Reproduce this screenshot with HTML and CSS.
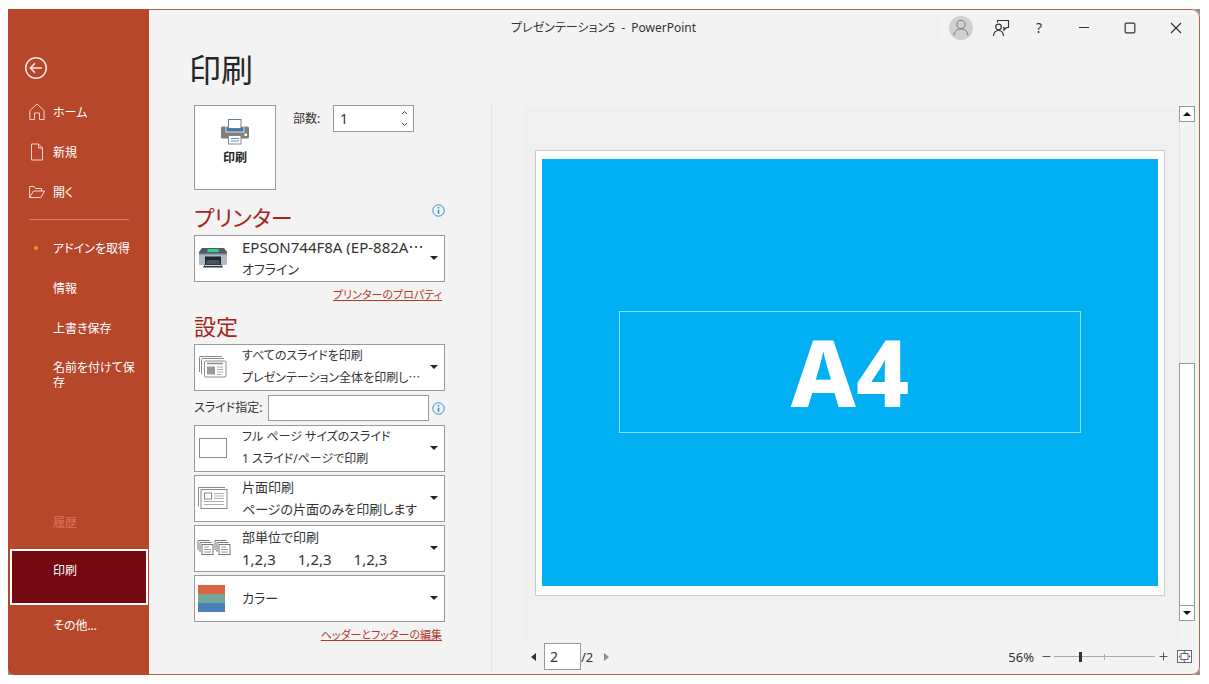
FILE: index.html
```html
<!DOCTYPE html>
<html lang="ja">
<head>
<meta charset="utf-8">
<title>プレゼンテーション5 - PowerPoint</title>
<link rel="stylesheet" href="styles.css">
</head>
<body>
<div class="desktop">
<div class="window">
  <nav class="sidebar" aria-label="ファイル">
    <button class="back" aria-label="戻る"><svg width="24" height="24" viewBox="0 0 24 24"><circle cx="12" cy="12" r="10.3"/><path d="M18 12H6.5M11 7.3L6.3 12l4.7 4.7"/></svg></button>
    <a class="item" href="#"><svg class="item-icon" width="16" height="18" viewBox="0 0 16 18"><path d="M.9 7.6L8 1l7.100 6.600V16.500H10.500V10H5.500v6.500H.9z"/></svg>ホーム</a>
    <a class="item" href="#"><svg class="item-icon" width="16" height="18" viewBox="0 0 16 18"><path d="M2.500 1h7L13.500 5v12h-11zM9.500 1v4h4"/></svg>新規</a>
    <a class="item" href="#"><svg class="item-icon" width="16" height="18" viewBox="0 0 16 18"><path d="M.6 14.500V3.500h4.500l1.500 2H12.500V8M.6 14.500L4.500 8H15.500L12 14.500z"/></svg>開く</a>
    <hr class="rule">
    <a class="item" href="#"><span class="item-icon"><span class="dot"></span></span>アドインを取得</a>
    <a class="item" href="#">情報</a>
    <a class="item" href="#">上書き保存</a>
    <a class="item item-tall" href="#">名前を付けて保存</a>
    <div class="sidebar-bottom">
      <a class="item disabled" href="#" aria-disabled="true">履歴</a>
      <a class="item current" href="#" aria-current="page">印刷</a>
      <a class="item" href="#">その他...</a>
    </div>
  </nav>

  <main class="main">
    <header class="titlebar">
      <div class="doc-title">プレゼンテーション5&nbsp; -&nbsp; PowerPoint</div>
      <span class="account-name"></span>
      <button class="tool account" aria-label="アカウント"><svg width="24" height="24" viewBox="0 0 24 24"><circle cx="12" cy="12" r="12" fill="#d0d0d0"/><g fill="none" stroke="#777"><circle cx="12" cy="8.500" r="4.200"/><path d="M5 19.500c.5-4.500 3-6.500 7-6.500s6.500 2 7 6.500"/></g></svg></button>
      <button class="tool" aria-label="フィードバック"><svg width="18" height="18" viewBox="0 0 18 18" fill="none" stroke="#333" stroke-width="1.200"><path d="M5.500 3.500V1.500H16.500V8.500H14.500L12 11V8.500H11"/><circle cx="6.500" cy="8" r="2.800"/><path d="M1.500 17c.3-3.500 2-5.500 5-5.500s4.700 2 5 5.500"/></svg></button>
      <button class="tool help" aria-label="ヘルプ">?</button>
      <button class="tool win" aria-label="最小化"><svg width="12" height="12" viewBox="0 0 12 12"><path d="M1 5.500H11"/></svg></button>
      <button class="tool win" aria-label="最大化"><svg width="12" height="12" viewBox="0 0 12 12"><rect x="1.200" y="1.200" width="9.600" height="9.600" rx="1"/></svg></button>
      <button class="tool win" aria-label="閉じる"><svg width="12" height="12" viewBox="0 0 12 12"><path d="M1 1l10 10M11 1L1 11"/></svg></button>
    </header>
    <h1>印刷</h1>

    <div class="columns">
      <form class="settings">
        <div class="print-row">
          <button class="print" type="button"><svg width="28" height="26" viewBox="0 0 28 26"><rect x="0" y="7.500" width="28" height="12" rx="1.500" fill="#7f7f7f"/><path d="M5 7.500h18v5.500H5z" fill="#3f76a8" stroke="#dce6ee"/><rect x="7.500" y=".5" width="12.500" height="9" fill="#fff" stroke="#6f7f8f"/><rect x="23.500" y="14.500" width="2.500" height="2.500" fill="#fff"/><rect x="7.500" y="16.500" width="12.500" height="8.500" fill="#fff" stroke="#8a8a8a"/><path d="M10 19.500h8M10 22h8" stroke="#5f8fc0"/></svg>印刷</button>
          <label class="copies-label" for="copies">部数:</label>
          <div class="spinner"><input id="copies" type="number" value="1" min="1">
            <span class="spin-buttons"><button type="button" aria-label="増やす"><svg width="7" height="5" viewBox="0 0 7 5"><path d="M1 4l2.500-2.500L6 4"/></svg></button><button type="button" aria-label="減らす"><svg width="7" height="5" viewBox="0 0 7 5"><path d="M1 1l2.500 2.500L6 1"/></svg></button></span>
          </div>
        </div>

        <div class="section-head"><h2>プリンター</h2><button class="info" type="button" aria-label="プリンターの情報"><svg width="13" height="13" viewBox="0 0 13 13"><circle cx="6.500" cy="6.500" r="5.700"/><path d="M6.500 5.800v4M6.500 3v1.600"/></svg></button></div>
        <div class="combo printer">
          <select aria-label="プリンター"><option>EPSON744F8A (EP-882A⋯</option></select>
          <svg class="combo-icon" width="30" height="22" viewBox="0 0 30 22"><path d="M4 1h22l3 4v3H1V5z" fill="#525b64"/><path d="M10 2h10l1 3H9z" fill="#2fd58b"/><path d="M1 6h28v11q0 1-1 1H2q-1 0-1-1z" fill="#aebac6"/><path d="M1 6h28v1.500H1z" fill="#6d7984"/><path d="M7 9.500h16V17H7z" fill="#22272c"/><path d="M9 13h12l1 4H8z" fill="#4b535b"/><path d="M7 17h16l2 3.500H5z" fill="#30363c"/><path d="M7 18.500h16" stroke="#d5dbe1"/></svg>
          <span class="note">オフライン</span><span class="arrow"></span>
        </div>
        <a class="more" href="#">プリンターのプロパティ</a>

        <div class="section-head"><h2>設定</h2></div>
        <div class="combo compact">
          <select aria-label="印刷範囲"><option>すべてのスライドを印刷</option></select>
          <svg class="combo-icon" width="30" height="22" viewBox="0 0 30 22" fill="none" stroke="#8a8a8a"><path d="M1.500 16V1.500q0-1 1-1H24M3.500 18V3.500q0-1 1-1H26"/><rect x="6.500" y="5" width="21.500" height="16" rx="1" fill="#fff"/><path d="M9 7.500h16" stroke-width="1.500"/><path d="M9 10.500h8v8H9z" fill="#999" stroke="none"/><path d="M19 11h6M19 13.500h6M19 16h6M19 18.500h4" stroke="#aaa"/></svg>
          <span class="note">プレゼンテーション全体を印刷し⋯</span><span class="arrow"></span>
        </div>
        <div class="range-row">
          <label for="slides">スライド指定:</label>
          <input id="slides" type="text">
          <button class="info" type="button" aria-label="スライド指定の情報"><svg width="13" height="13" viewBox="0 0 13 13"><circle cx="6.500" cy="6.500" r="5.700"/><path d="M6.500 5.800v4M6.500 3v1.600"/></svg></button>
        </div>
        <div class="stack">
          <div class="combo compact">
            <select aria-label="印刷レイアウト"><option>フル ページ サイズのスライド</option></select>
            <svg class="combo-icon" width="30" height="22" viewBox="0 0 30 22"><rect x="1.500" y="1.500" width="27" height="19" fill="#fff" stroke="#8a8a8a"/></svg>
            <span class="note">1 スライド/ページで印刷</span><span class="arrow"></span>
          </div>
          <div class="combo">
            <select aria-label="印刷面"><option>片面印刷</option></select>
            <svg class="combo-icon" width="30" height="22" viewBox="0 0 30 22" fill="none" stroke="#8a8a8a"><path d="M.5 19.500V.5H27"/><rect x="3" y="2.500" width="26" height="19" fill="#fff"/><rect x="6.500" y="6" width="7" height="6"/><path d="M16 6.500h10M16 9h10M16 11.500h10M6 14.500h20M6 17.500h20" stroke="#b0b0b0"/></svg>
            <span class="note">ページの片面のみを印刷します</span><span class="arrow"></span>
          </div>
          <div class="combo">
            <select aria-label="部単位"><option>部単位で印刷</option></select>
            <svg class="combo-icon wide" width="34" height="22" viewBox="0 0 34 22" fill="none" stroke="#777"><g id="pages"><path d="M1 13V3.500H12.500M3 15V5.500H14.500"/><rect x="5" y="7.500" width="11" height="10" fill="#fff"/><path d="M7 10h5M7 12.500h7M7 15h7" stroke="#999"/></g><use href="#pages" x="17"/></svg>
            <span class="note triples"><span>1,2,3</span><span>1,2,3</span><span>1,2,3</span></span><span class="arrow"></span>
          </div>
          <div class="combo single">
            <select aria-label="色"><option>カラー</option></select>
            <svg class="combo-icon" width="28" height="28" viewBox="0 0 28 28"><path d="M0 1h27v9H0z" fill="#d96544"/><path d="M0 10h27v9H0z" fill="#74a797"/><path d="M0 19h27v9H0z" fill="#4b80b9"/></svg>
            <span class="arrow"></span>
          </div>
        </div>
        <a class="more" href="#">ヘッダーとフッターの編集</a>
      </form>

      <section class="preview" aria-label="印刷プレビュー">
        <div class="stage">
          <div class="paper"><div class="slide"><div class="slide-title">A4</div></div></div>
        </div>
        <div class="scrollbar">
          <button aria-label="上へ"><span class="tri up"></span></button>
          <div class="track"><div class="thumb"></div></div>
          <button aria-label="下へ"><span class="tri down"></span></button>
        </div>
        <footer class="statusbar">
          <button class="page-button" aria-label="前のページ"><span class="tri left"></span></button>
          <input class="page-number" type="text" value="2" aria-label="ページ">
          <span class="page-total">/2</span>
          <button class="page-button" aria-label="次のページ" disabled><span class="tri right"></span></button>
          <span class="zoom-value">56%</span>
          <button class="zoom-button" aria-label="縮小"><svg width="9" height="9" viewBox="0 0 9 9"><path d="M.5 4.500h8"/></svg></button>
          <input class="zoom" type="range" min="0" max="100" value="26" aria-label="ズーム">
          <button class="zoom-button" aria-label="拡大"><svg width="9" height="9" viewBox="0 0 9 9"><path d="M.5 4.500h8M4.500.5v8"/></svg></button>
          <button class="fit" aria-label="ページに合わせる"><svg width="15" height="13" viewBox="0 0 15 13"><rect x=".5" y=".5" width="14" height="12" fill="#fff" stroke="#666"/><rect x="4" y="3.500" width="7" height="6" fill="#fff" stroke="#56688a"/><path d="M6 2.500L7.500 1 9 2.500zM6 10.500L7.500 12 9 10.500zM3 5L1.500 6.500 3 8zM12 5l1.500 1.500L12 8z" fill="#3e5c94"/></svg></button>
        </footer>
      </section>
    </div>
  </main>
</div>
</div>
</body>
</html>
```
FILE: styles.css
```css
* { box-sizing: border-box; }

body {
  margin: 0;
  padding: 9px 9px 9px 8px;
  background: #fff;
  color: #333;
  font: 12px/16px "Noto Sans", "Noto Sans CJK JP", sans-serif;
  font-feature-settings: "palt";
}

button, input, select { font: inherit; color: inherit; font-feature-settings: inherit; border-radius: 0; }
button { padding: 0; border: 0; background: none; display: flex; align-items: center; justify-content: center; }
input { min-width: 0; outline: 0; }
svg { display: block; flex: none; }

.desktop { background: #8d8f98; }

.window {
  display: grid;
  grid-template-columns: 141px 1fr;
  min-height: calc(100vh - 18px);
  background: #f3f3f3;
  border-radius: 0 8px 8px 6px;
  overflow: hidden;
}

/* Sidebar */
.sidebar { display: flex; flex-direction: column; padding: 47px 0 30px; background: #b7472a; color: #fff; }
.back { width: 24px; height: 24px; margin: 0 0 12px 16px; }
.back svg { fill: none; stroke: #fbe9e4; stroke-width: 1.5; }
.item { display: flex; align-items: center; height: 40px; padding: 0 14px 0 45px; color: #fff; text-decoration: none; line-height: 15px; }
.item-icon { width: 16px; margin: 0 8px 0 -24px; fill: none; stroke: #f6d5cc; display: flex; justify-content: center; }
.dot { width: 4px; height: 4px; margin-right: 2px; border-radius: 50%; background: #f0941e; }
.item-tall { height: auto; padding-top: 12px; }
.rule { width: 100px; height: 1px; margin: 7px 0 8px 21px; border: 0; background: #da7a60; }
.sidebar-bottom { margin-top: auto; }
.disabled { color: #df7359; margin-bottom: 7px; }
.current { height: 56px; margin: 0 1px 0 2px; padding: 0 0 14px 41px; border: 2px solid #fff; background: #740912; }

/* Title bar */
.main { display: flex; flex-direction: column; min-width: 0; border: 1px solid #b5614c; border-left: 0; border-radius: 0 8px 8px 0; }
.titlebar { display: flex; align-items: center; height: 35px; padding-left: 34%; }
.doc-title { flex: 1; padding-left: 5px; white-space: nowrap; }
.account-name { width: 60px; height: 23px; background: #f1f1f1; }
.tool { width: 38px; height: 32px; }
.account { width: 42px; }
.help { font-size: 14px; margin-right: 3px; }
.win { width: 46px; }
.win svg { fill: none; stroke: #333; stroke-width: 1.2; }

h1 { margin: 6px 0 16px 40px; font-size: 32px; line-height: 38px; font-weight: 400; color: #262626; }
.columns { flex: 1; display: grid; grid-template-columns: 343px 1fr; padding-bottom: 2px; }

/* Print settings */
.settings { padding: 0 46px 0 45px; border-right: 1px solid #e3e3e3; }
.print-row { display: flex; align-items: flex-start; }
.print { flex-direction: column; gap: 5px; width: 82px; height: 85px; padding-bottom: 10px; border: 1px solid #999; background: #fff; font-weight: 700; color: #262626; }
.copies-label { margin-left: 17px; width: 40px; line-height: 28px; }
.spinner { display: flex; width: 81px; height: 27px; border: 1px solid #999; background: #fff; }
.spinner input { flex: 1; padding: 0 0 0 6px; border: 0; font-size: 14px; appearance: textfield; background: none; }
.spinner input::-webkit-inner-spin-button { appearance: none; margin: 0; }
.spin-buttons { display: flex; flex-direction: column; width: 18px; }
.spin-buttons button { flex: 1; }
.spin-buttons svg { fill: none; stroke: #444; }

.section-head { display: flex; justify-content: space-between; margin-top: 14px; height: 31px; }
.more + .section-head { margin-top: 5px; }
h2 { margin: 0; font-size: 22px; line-height: 26px; font-weight: 400; color: #a6241a; }
.info { width: 13px; height: 13px; }
.info svg { fill: none; stroke: #2f8fd0; }
.info path { stroke-width: 1.6; }

.combo {
  display: grid;
  grid-template: 22px 22px / 47px minmax(0, 1fr) 20px;
  height: 47px;
  border: 1px solid #999;
  background: #fff;
  font-size: 13px;
}
.combo select { grid-area: 1 / 1 / -1 / -1; appearance: none; border: 0; background: none; padding: 0 18px 22px 47px; outline: 0; }
.combo-icon { grid-area: 1 / 1 / -1 / 2; align-self: center; margin-left: 3px; pointer-events: none; }
.combo-icon.wide { margin-left: 2px; }
.note { grid-area: 2 / 2; line-height: 22px; white-space: nowrap; pointer-events: none; }
.arrow { grid-area: 1 / 3 / -1 / 4; place-self: center; pointer-events: none; border: 4px solid transparent; border-top-color: #222; border-bottom: 0; }
.compact { font-size: 12px; }
.printer select { font-size: 15px; }
.triples { display: flex; gap: 22px; font-size: 15px; }
.single select { padding-bottom: 0; }
.more { display: block; width: fit-content; margin-left: auto; padding-right: 3px; font-size: 11px; line-height: 26px; color: #b0392b; }
.range-row { display: grid; grid-template-columns: 74px 1fr 16px; align-items: center; justify-items: stretch; height: 26px; margin: 4px 0; }
.range-row input { height: 26px; border: 1px solid #999; background: #fff; }
.range-row label { white-space: nowrap; }
.range-row .info { justify-self: end; }
.stack { display: grid; gap: 3px; }

/* Preview */
.preview { display: grid; grid-template: 1fr 33px / 1fr 16px; padding: 1px 4px 0 31px; }
.stage { display: grid; align-items: center; padding: 0 14px 0 12px; background: #f0f0f0; }
.paper { display: grid; aspect-ratio: 630 / 446; padding: 8px 6px 9px; border: 1px solid #ccc; background: #fff; }
.slide { display: grid; place-items: center; background: #00b0f3; }
.slide-title { display: grid; place-items: center; width: 75%; height: 122px; border: 1px solid #8be0fb; color: #fff; font-size: 92px; font-weight: 800; line-height: 120px; }

.scrollbar { display: flex; flex-direction: column; height: calc(100% - 18px); }
.scrollbar button { height: 16px; border: 1px solid #999; background: #fff; }
.track { flex: 1; display: flex; align-items: flex-end; border: 1px solid #e4e4e4; border-width: 0 1px; }
.thumb { width: 100%; height: 50%; background: #fff; box-shadow: 0 0 0 1px #999; }
.tri { border: 4px solid transparent; }
.up { border-bottom-color: #111; border-top: 0; }
.down { border-top-color: #111; border-bottom: 0; }
.left { border-right: 5px solid #333; border-left: 0; }
.right { border-left: 5px solid #8b8b8b; border-right: 0; }

.statusbar { grid-column: 1 / -1; display: flex; align-items: center; padding: 2px 3px 0 0; }
.page-button { width: 21px; height: 26px; }
.page-number { width: 37px; height: 27px; padding: 0 5px; border: 1px solid #999; background: #fff; font-size: 14px; }
.page-total { width: 15px; font-size: 13px; }
.zoom-value { margin-left: auto; font-size: 13px; }
.zoom-button { width: 16px; height: 16px; margin-left: 4px; }
.zoom-button svg { stroke: #555; }
.zoom {
  width: 101px; height: 12px; margin: 0; appearance: none;
  background: linear-gradient(#aaa, #aaa) center / 100% 1px no-repeat, linear-gradient(#aaa, #aaa) center / 1px 6px no-repeat;
}
.zoom + .zoom-button { margin: 0 2px 0 0; }
.zoom::-webkit-slider-thumb { appearance: none; width: 3px; height: 10px; background: #333; }
.fit { margin-left: 4px; }
```
